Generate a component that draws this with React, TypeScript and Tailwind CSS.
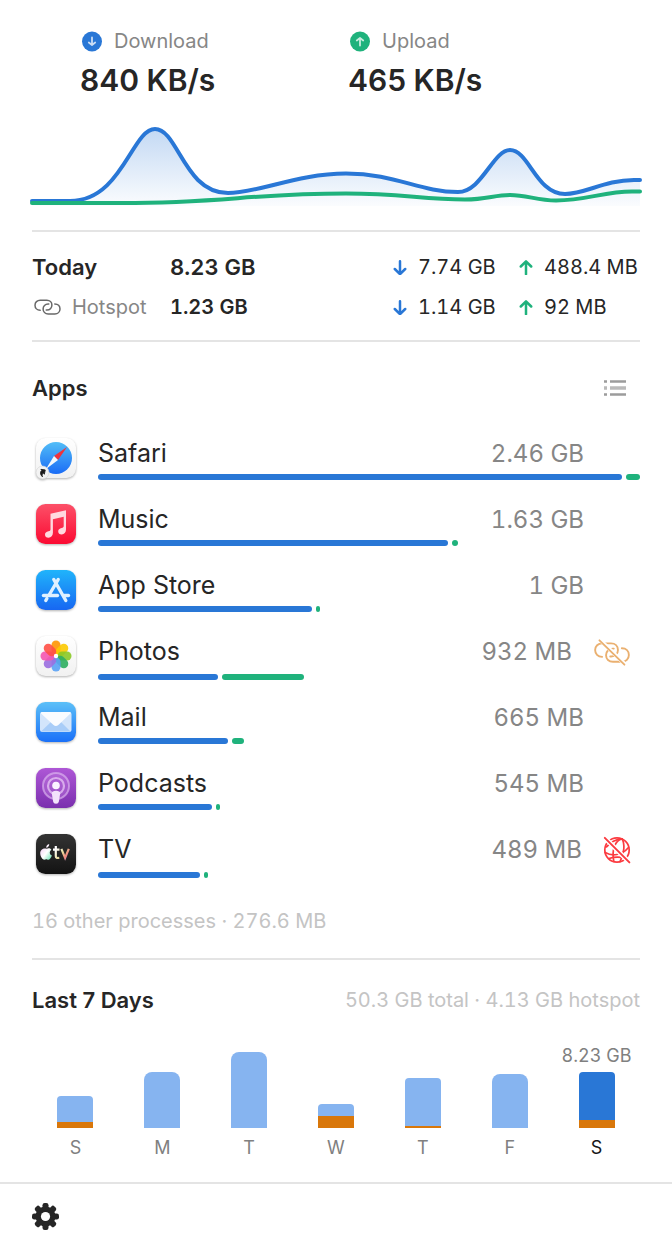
import type { ReactNode } from "react";
import clsx from "clsx";

type AppUsage = {
  name: string;
  total: string;
  down: number;
  up: number;
  icon: ReactNode;
  blocked?: "hotspot" | "internet";
};

type DayUsage = {
  day: string;
  wifi: number;
  hotspot: number;
  label?: string;
};

// Bar lengths are relative to the widest row.
const TRACK = 542;

const PETALS = [
  "#ff9500",
  "#fcc900",
  "#8ac926",
  "#2fae60",
  "#5aa2f5",
  "#9b6fe0",
  "#f455b0",
  "#ff4f45",
];

function Tile({ id, from, to, children }: {
  id: string;
  from: string;
  to: string;
  children: ReactNode;
}) {
  return (
    <svg
      viewBox="0 0 48 48"
      className="size-12 shrink-0 drop-shadow-[0_1px_1px_rgba(0,0,0,0.3)]"
      aria-hidden="true"
    >
      <defs>
        <linearGradient id={id} x1="0" y1="0" x2="0" y2="1">
          <stop offset="0" stopColor={from} />
          <stop offset="1" stopColor={to} />
        </linearGradient>
      </defs>
      <rect x="4" y="4" width="40" height="40" rx="9.5" fill={`url(#${id})`} />
      {children}
    </svg>
  );
}

function SafariIcon() {
  return (
    <Tile id="safari" from="#ffffff" to="#f1f1f1">
      <defs>
        <linearGradient id="safari-dial" x1="0" y1="0" x2="0" y2="1">
          <stop offset="0" stopColor="#52bdf7" />
          <stop offset="1" stopColor="#1a6cf6" />
        </linearGradient>
      </defs>
      <circle cx="24" cy="24" r="16" fill="url(#safari-dial)" />
      <path d="M35 13 22 22l4 4z" fill="#f0323c" />
      <path d="M14 35 22 22l4 4z" fill="#f4f7fb" />
      <circle cx="10.5" cy="38.500" r="6.500" fill="#f3f3f3" stroke="#d6d6d6" strokeWidth=".6" />
      <path d="M8 42c-.6-3.500.6-5.300 3-5.600V35l3.200 3-3.200 3v-1.600c-1.600 0-2.500.8-3 2.600z" fill="#1c1c1c" stroke="#1c1c1c" strokeWidth=".8" transform="rotate(-35 10.500 38.500)" />
    </Tile>
  );
}

function MusicIcon() {
  return (
    <Tile id="music" from="#fc5068" to="#fb0a32">
      <path
        d="M18.500 13.800 34 10.300v19.200c0 3-1.800 4.900-4.300 4.900-2.100 0-3.500-1.200-3.500-3 0-1.900 1.300-3 3.400-3.400 1.500-.3 2.100-.7 2.100-2v-9.200l-10.800 2.400v13.600c0 3-1.800 4.900-4.400 4.900-2.100 0-3.500-1.200-3.500-3 0-1.900 1.300-3 3.400-3.400 1.500-.3 2.100-.7 2.100-2z"
        fill="#ffd9df"
      />
    </Tile>
  );
}

function AppStoreIcon() {
  return (
    <Tile id="app-store" from="#20b4fb" to="#1767f2">
      <g fill="none" stroke="#dff0ff" strokeWidth="3.400" strokeLinecap="round">
        <path d="M21.800 13.500 33.800 34.500" />
        <path d="M26.200 13.500 17.400 28.500" />
        <path d="M14.900 32.500 13.800 34.500" />
        <path d="M11.500 29.500h14" />
        <path d="M32 29.500h4.500" />
      </g>
    </Tile>
  );
}

function PhotosIcon() {
  return (
    <Tile id="photos" from="#ffffff" to="#f1f1f1">
      {PETALS.map((color, i) => (
        <rect
          key={color}
          x="19.500"
          y="8.500"
          width="9"
          height="14"
          rx="4.500"
          fill={color}
          fillOpacity=".9"
          transform={`rotate(${i * 45} 24 24)`}
        />
      ))}
      <circle cx="24" cy="24" r="2.200" fill="#fff" />
    </Tile>
  );
}

function MailIcon() {
  return (
    <Tile id="mail" from="#5cc0f8" to="#1a70f8">
      <rect x="8" y="14" width="31.500" height="20" rx="2.500" fill="#d3e5fb" />
      <path d="M9 33.500 20 23h8l10.500 10.500z" fill="#a9cdf8" />
      <path d="M8.500 15c.4-.7 1-1 2-1h26.500c1 0 1.600.3 2 1L26.300 27c-1.500 1.300-3.300 1.300-4.800 0z" fill="#fafcff" />
    </Tile>
  );
}

function PodcastsIcon() {
  return (
    <Tile id="podcasts" from="#ae57d6" to="#7a2fae">
      <g fill="none" stroke="#e3bff3">
        <circle cx="24" cy="22" r="13" strokeWidth="2" fill="#c583e2" fillOpacity=".35" strokeOpacity=".6" />
        <circle cx="24" cy="22" r="8" strokeWidth="2.200" strokeOpacity=".8" />
      </g>
      <circle cx="24" cy="21.500" r="3.800" fill="#fbf3ff" />
      <path d="M19.800 29.500c0-2 1.600-2.800 4.200-2.800s4.200.8 4.200 2.800l-1.300 7.700c-.3 1.700-1.300 2.500-2.900 2.500s-2.600-.8-2.900-2.500z" fill="#f3e2fb" />
    </Tile>
  );
}

function TvIcon() {
  return (
    <Tile id="tv" from="#333333" to="#131313">
      <defs>
        <linearGradient id="tv-apple" x1="0" y1="0" x2="1" y2="1">
          <stop offset=".2" stopColor="#f3d9f5" />
          <stop offset=".55" stopColor="#fff" />
          <stop offset="1" stopColor="#64e0b0" />
        </linearGradient>
        <linearGradient id="tv-letters" x1="20" y1="18" x2="36" y2="30" gradientUnits="userSpaceOnUse">
          <stop offset=".2" stopColor="#ffffff" />
          <stop offset=".55" stopColor="#e8dc9c" />
          <stop offset=".8" stopColor="#f0837c" />
          <stop offset="1" stopColor="#c8b4e8" />
        </linearGradient>
      </defs>
      <path
        d="M14.800 18.800c1.300-.9 3.400-.8 4.600.9-2.400 1.700-2 4.700.5 5.700-.9 2.500-2.300 4.300-3.600 4.300-.9 0-1.200-.5-2-.5s-1.300.5-2.100.5c-1.900 0-4-3.500-4-6.400 0-4 3.800-5.800 6.600-4.500zm-.6-1c-.1-2 1.200-3.500 3-3.800.2 2-1.200 3.600-3 3.800z"
        fill="url(#tv-apple)"
      />
      <g fill="none" stroke="url(#tv-letters)" strokeWidth="2.200">
        <path d="M23.800 16v10c0 1.800 1 2.300 3.500 1.900M21 19.700h6.500" />
        <path d="m29.400 18.900 3.700 9 3.700-9" />
      </g>
    </Tile>
  );
}

function LinkShape() {
  return (
    <>
      <path d="M6.200 11.200C3 11.200 1 9 1 6.200 1 3.300 3.200 1.200 6.200 1.200h6.600c3 0 5.100 2 5.100 4.900 0 2.800-2 4.900-5 4.900h-.7" />
      <path d="M20.800 4.900c3.200 0 5.200 2.200 5.200 5 0 2.900-2.200 5-5.200 5h-6.600c-3 0-5.100-2-5.100-4.900 0-2.800 2-4.900 5-4.900h.7" />
    </>
  );
}

function HotspotIcon() {
  return (
    <svg viewBox="0 0 27 16" className="h-4 w-[27px] fill-none stroke-[#686868] stroke-[1.5px]" strokeLinecap="round" aria-hidden="true">
      <LinkShape />
    </svg>
  );
}

function HotspotBlockedIcon() {
  return (
    <svg viewBox="-0.500 -2 28 20" className="h-[27px] w-[38px] fill-none stroke-[#eab070]" strokeLinecap="round" aria-hidden="true">
      <g strokeWidth="1.400">
        <LinkShape />
      </g>
      <path d="M5.200-.8 22.800 16.400" stroke="#fff" strokeWidth="3" />
      <path d="M4.200-1 22.700 17" strokeWidth="1.400" />
    </svg>
  );
}

function GlobeBlockedIcon() {
  return (
    <svg viewBox="0 0 28 28" className="size-7 fill-none stroke-[#fb3b40]" strokeLinecap="round" aria-hidden="true">
      <g strokeWidth="1.700">
        <circle cx="14" cy="14" r="12.200" />
        <path d="M19 2.900C12 4.500 8.500 14 10.800 25.500" />
        <path d="M19 2.900c-5.500.4-12 3.800-15.500 8" />
        <path d="M19 2.900c3 5 2.500 14-2 22.800" />
        <path d="M2.200 16.500c7 4 16.500 3 23.300-5" />
        <path d="M6 22.500c5-1.500 12-1.500 16.500 0" />
      </g>
      <path d="M2.500 2.500 25.500 25.500" stroke="#fff" strokeWidth="4.600" />
      <path d="M1.800 1.800 26.400 26.400" strokeWidth="1.900" />
    </svg>
  );
}

function ArrowIcon({ up = false }: { up?: boolean }) {
  return (
    <svg
      viewBox="0 0 14 16"
      className={clsx("h-4 w-3.5 shrink-0 fill-none stroke-[2.5px]", up ? "stroke-[#1fb27c]" : "stroke-[#2977d6]")}
      strokeLinecap="round"
      strokeLinejoin="round"
      aria-hidden="true"
    >
      <path d={up ? "M7 15.200V2.500M1.800 7.500 7 2.300 12.200 7.500" : "M7 2.300V15M1.800 10 7 15.200 12.200 10"} />
    </svg>
  );
}

function ListIcon() {
  return (
    <svg viewBox="0 0 24 18" className="h-[18px] w-6" aria-hidden="true">
      <path
        d="M0 2.500h3M6 2.500H22M0 15.500h3M6 15.500H22"
        stroke="#9c9c9c"
        strokeWidth="2.600"
      />
      <path d="M0 9h3M6 9H22" stroke="#bababa" strokeWidth="3.600" />
    </svg>
  );
}

function GearIcon() {
  return (
    <svg viewBox="0 0 28 28" className="size-7" aria-hidden="true">
      <circle cx="13.500" cy="13.500" r="10" fill="#262626" />
      {[0, 45, 90, 135].map((angle) => (
        <rect
          key={angle}
          x="10.500"
          y="0"
          width="6"
          height="27"
          rx="2.200"
          fill="#262626"
          transform={`rotate(${angle} 13.500 13.500)`}
        />
      ))}
      <circle cx="13.500" cy="13.500" r="4.600" fill="#fff" />
    </svg>
  );
}

function SpeedBadge({ up = false }: { up?: boolean }) {
  return (
    <svg viewBox="0 0 24 24" className="size-6" aria-hidden="true">
      <circle cx="12" cy="12.500" r="10" fill={up ? "#1fb27c" : "#2977d6"} />
      <path
        d={up ? "M12 16.500V9.500M8.800 11.500 12 9l3.200 2.500" : "M12 8.500v7M8.800 13.500 12 16l3.200-2.500"}
        fill="none"
        stroke="#fff"
        strokeOpacity=".75"
        strokeWidth="1.800"
        strokeLinecap="round"
        strokeLinejoin="round"
      />
    </svg>
  );
}

const DOWN_LINE =
  "M0 77H38C90 77 100 5 123 5C146 5 152 69 196 69C226 69 266 49.500 314 49.500C363 49.500 388 68 426 68C450 68 461 26 478 26C497 26 504 70 533 70C553 70 573 56 602 56H608";
const UP_LINE =
  "M0 79H90C190 79 220 69.500 314 69.500C370 69.500 390 75.500 433 75.500C455 75.500 462 71 478 71C495 71 505 76.500 524 76.500C554 76.500 572 67.500 600 67.500H608";

function SpeedChart() {
  return (
    <svg
      viewBox="0 0 608 84"
      preserveAspectRatio="none"
      className="mt-6 block h-[84px] w-full overflow-visible"
      role="img"
      aria-label="Network speed"
    >
      <defs>
        <linearGradient id="speed-fill" x1="0" y1="5" x2="0" y2="82" gradientUnits="userSpaceOnUse">
          <stop offset="0" stopColor="#2977d6" stopOpacity=".28" />
          <stop offset="1" stopColor="#2977d6" stopOpacity=".02" />
        </linearGradient>
      </defs>
      <path d={`${DOWN_LINE}V82H0Z`} fill="url(#speed-fill)" />
      <g fill="none" strokeWidth="4" strokeLinecap="round">
        <path d={DOWN_LINE} stroke="#2977d6" />
        <path d={UP_LINE} stroke="#1fb27c" />
      </g>
    </svg>
  );
}

const speeds = [
  { label: "Download", value: "840 KB/s", up: false },
  { label: "Upload", value: "465 KB/s", up: true },
];

const apps: AppUsage[] = [
  { name: "Safari", total: "2.46 GB", down: 524, up: 14, icon: <SafariIcon /> },
  { name: "Music", total: "1.63 GB", down: 350, up: 6, icon: <MusicIcon /> },
  { name: "App Store", total: "1 GB", down: 214, up: 4, icon: <AppStoreIcon /> },
  { name: "Photos", total: "932 MB", down: 120, up: 82, icon: <PhotosIcon />, blocked: "hotspot" },
  { name: "Mail", total: "665 MB", down: 130, up: 12, icon: <MailIcon /> },
  { name: "Podcasts", total: "545 MB", down: 114, up: 4, icon: <PodcastsIcon /> },
  { name: "TV", total: "489 MB", down: 102, up: 4, icon: <TvIcon />, blocked: "internet" },
];

const days: DayUsage[] = [
  { day: "S", wifi: 26, hotspot: 6 },
  { day: "M", wifi: 56, hotspot: 0 },
  { day: "T", wifi: 76, hotspot: 0 },
  { day: "W", wifi: 12, hotspot: 12 },
  { day: "T", wifi: 48, hotspot: 2 },
  { day: "F", wifi: 54, hotspot: 0 },
  { day: "S", wifi: 48, hotspot: 8, label: "8.23 GB" },
];

function Traffic({ value, up }: { value: string; up?: boolean }) {
  return (
    <td className="p-0">
      <div className="flex items-center gap-[11px] whitespace-nowrap">
        <ArrowIcon up={up} />
        {value}
      </div>
    </td>
  );
}

function AppRow({ app }: { app: AppUsage }) {
  return (
    <li className="flex h-[66px] gap-[18px]">
      {app.icon}
      <div className="min-w-0 flex-1 pt-0.5">
        <div className="flex h-9 items-center pr-[9px] text-2xl">
          <span className="flex-1 truncate text-[25px] text-[#262626]">{app.name}</span>
          <span className="mr-[21px] text-[#868686] tabular-nums">{app.total}</span>
          {app.blocked === "hotspot" && (
            <button type="button" aria-label={`Allow ${app.name} on hotspot`}>
              <HotspotBlockedIcon />
            </button>
          )}
          {app.blocked === "internet" && (
            <button type="button" aria-label={`Allow ${app.name} online`}>
              <GlobeBlockedIcon />
            </button>
          )}
          {!app.blocked && <span className="w-[26px]" />}
        </div>
        <div className={clsx("flex gap-1", app.blocked ? "mt-1" : "mt-0.5")}>
          <div
            className="h-1.5 rounded-full bg-[#2977d6]"
            style={{ width: `${(app.down / TRACK) * 100}%` }}
          />
          <div
            className="h-1.5 rounded-full bg-[#1fb27c]"
            style={{ width: `${(app.up / TRACK) * 100}%` }}
          />
        </div>
      </div>
    </li>
  );
}

function DayColumn({ day, today }: { day: DayUsage; today: boolean }) {
  return (
    <div className="flex flex-col items-center justify-end">
      {day.label && (
        <span className="mb-1 whitespace-nowrap text-lg leading-6 text-[#808080] tabular-nums">
          {day.label}
        </span>
      )}
      <div className={clsx("w-9 overflow-hidden", day.hotspot ? "rounded-t" : "rounded-t-lg")}>
        <div className={today ? "bg-[#2977d6]" : "bg-[#86b4f0]"} style={{ height: day.wifi }} />
        <div className="bg-[#d9770a]" style={{ height: day.hotspot }} />
      </div>
      <span className={clsx("mt-2 text-lg leading-6", today ? "text-[#171717]" : "text-[#808080]")}>
        {day.day}
      </span>
    </div>
  );
}

export default function App() {
  return (
    <main className="bg-white font-['Inter',sans-serif] text-[#262626]">
      <div className="px-8">
        <section className="pt-[29px]">
          <div className="grid grid-cols-2 pr-6 pl-12">
            {speeds.map((speed) => (
              <div key={speed.label}>
                <div className="flex items-center gap-2.5 text-xl leading-6 text-[#868686]">
                  <SpeedBadge up={speed.up} />
                  {speed.label}
                </div>
                <div className="mt-[7px] text-3xl leading-10 font-semibold">{speed.value}</div>
              </div>
            ))}
          </div>
          <SpeedChart />
        </section>

        <section className="mt-[22px] border-y-2 border-[#e4e4e4] pt-[15px] pb-[13px]">
          <table className="w-full table-fixed text-left text-xl tabular-nums">
            <colgroup>
              <col className="w-[138px]" />
              <col />
              <col className="w-[126px]" />
              <col className="w-[121px]" />
            </colgroup>
            <tbody>
              <tr className="h-10">
                <th scope="row" className="p-0 text-[22px] leading-8 font-semibold">Today</th>
                <td className="p-0 text-[22px] leading-8 font-semibold">8.23 GB</td>
                <Traffic value="7.74 GB" />
                <Traffic value="488.4 MB" up />
              </tr>
              <tr className="h-10">
                <th scope="row" className="p-0 font-normal text-[#868686]">
                  <div className="flex items-center gap-[11px] pl-0.5">
                    <HotspotIcon />
                    Hotspot
                  </div>
                </th>
                <td className="p-0 font-semibold">1.23 GB</td>
                <Traffic value="1.14 GB" />
                <Traffic value="92 MB" up />
              </tr>
            </tbody>
          </table>
        </section>

        <section className="border-b-2 border-[#e4e4e4] pt-[30px] pb-6">
          <header className="flex h-8 items-center justify-between pr-3">
            <h2 className="text-[22px] font-semibold">Apps</h2>
            <button type="button" aria-label="List options">
              <ListIcon />
            </button>
          </header>
          <ul className="mt-[30px]">
            {apps.map((app) => (
              <AppRow key={app.name} app={app} />
            ))}
          </ul>
          <p className="mt-3 text-xl leading-[26px] text-[#c4c4c4] tabular-nums">
            16 other processes · 276.6 MB
          </p>
        </section>

        <section className="pt-6 pb-[22px]">
          <header className="flex h-8 items-center justify-between">
            <h2 className="text-[22px] font-semibold">Last 7 Days</h2>
            <p className="text-xl text-[#c4c4c4] tabular-nums">50.3 GB total · 4.13 GB hotspot</p>
          </header>
          <div className="grid h-36 grid-cols-7">
            {days.map((day, i) => (
              <DayColumn key={i} day={day} today={i === days.length - 1} />
            ))}
          </div>
        </section>
      </div>

      <footer className="border-t-2 border-[#e4e4e4] px-8 py-[19px]">
        <button type="button" aria-label="Settings" className="block">
          <GearIcon />
        </button>
      </footer>
    </main>
  );
}
